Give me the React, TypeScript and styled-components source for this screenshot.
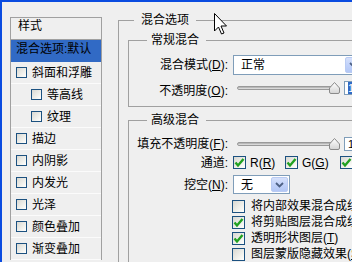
import React from 'react'
import styled, {createGlobalStyle} from 'styled-components'

const GlobalStyle = createGlobalStyle`
	html, body {
		margin: 0;
		padding: 0;
		background: #efefef;
	}
`

const Page = styled.div`
	position: relative;
	width: 352px;
	height: 262px;
	overflow: hidden;
	box-sizing: border-box;
	border-top: 2px solid #0a4be0;
	border-left: 2px solid #0a4be0;
	background: #efefef;
	display: flex;
	align-items: flex-start;
	font-family: "Liberation Sans", "Noto Sans CJK SC", sans-serif;
	font-size: 12px;
	color: #000;
`

const StyleList = styled.div`
	flex-shrink: 0;
	width: 92px;
	margin: 15px 0 0 8px;
	box-sizing: border-box;
	border: 1px solid #a0a0a0;
	border-bottom: none;
`

const ListHeader = styled.div`
	height: 22px;
	box-sizing: border-box;
	padding: 1px 0 0 7px;
	line-height: 14px;
	border-bottom: 1px solid #a0a0a0;
`

const ListRow = styled.div<{$level?: number, $selected?: boolean}>`
	height: 22px;
	box-sizing: border-box;
	display: flex;
	align-items: center;
	gap: 5px;
	padding-left: ${p => p.$level ? 20 : 5}px;
	padding-bottom: ${p => p.$selected ? 3 : 0}px;
	border-bottom: 1px solid ${p => p.$selected ? '#316ac5' : '#fbfbfb'};
	background: ${p => p.$selected ? '#316ac5' : 'transparent'};
	line-height: 14px;
	white-space: nowrap;
`

const SmallBox = styled.span`
	width: 11px;
	height: 11px;
	box-sizing: border-box;
	border: 1px solid #1c5180;
	background: linear-gradient(135deg, #d8d8d2 0%, #f4f4f0 70%, #ffffff 100%);
	flex-shrink: 0;
`

const Options = styled.fieldset`
	flex-shrink: 0;
	width: 260px;
	min-height: 300px;
	margin: 11px 0 0 16px;
	padding: 0;
	border: 1px solid #a0a0a0;
	border-right: none;
	border-bottom: none;
`

const Group = styled.fieldset<{$top: number, $pb: number}>`
	width: 250px;
	margin: ${p => p.$top}px 0 0 9px;
	padding: 0 0 ${p => p.$pb}px 0;
	border: 1px solid #a0a0a0;
	border-right: none;
	box-sizing: border-box;
`

const Legend = styled.legend<{$ml: number}>`
	margin-left: ${p => p.$ml}px;
	padding: 0 7px 0 ${p => p.$ml > 15 ? 4 : 7}px;
	line-height: 15px;
	font-size: 12px;
	white-space: nowrap;
`

const Row = styled.div<{$top: number, $h: number}>`
	display: grid;
	grid-template-columns: 99px 1fr;
	column-gap: 5px;
	align-items: center;
	height: ${p => p.$h}px;
	margin-top: ${p => p.$top}px;
`

const Label = styled.div<{$shift?: number}>`
	text-align: right;
	line-height: 14px;
	white-space: nowrap;
	position: relative;
	top: ${p => p.$shift || 0}px;
`

const Key = styled.span`
	text-decoration: underline;
`

const Select = styled.div<{$w: number, $h: number}>`
	width: ${p => p.$w}px;
	height: ${p => p.$h}px;
	box-sizing: border-box;
	border: 1px solid #7f9db9;
	background: #fff;
	display: flex;
	align-items: center;
	justify-content: space-between;
	padding: 1px;
`

const SelectText = styled.span`
	padding-left: 6px;
	line-height: 14px;
`

const DropButton = styled.span`
	width: 17px;
	height: 100%;
	box-sizing: border-box;
	border-radius: 2px;
	border: 1px solid #b9cbf3;
	background: linear-gradient(180deg, #d6e1fb 0%, #c1d2fa 50%, #b3c7f5 100%);
	display: flex;
	align-items: center;
	justify-content: center;
`

const SliderLine = styled.div`
	display: flex;
	align-items: center;
	gap: 4px;
`

const SliderTrackWrap = styled.div`
	position: relative;
	width: 107px;
	height: 14px;
	display: flex;
	align-items: center;
`

const Track = styled.div`
	margin-left: 4px;
	width: 99px;
	height: 4px;
	box-sizing: border-box;
	border: 1px solid #9a9a9a;
	border-radius: 2px;
	background: linear-gradient(180deg, #a8a8a8 0%, #d0d0d0 60%, #e8e8e8 100%);
`

const Thumb = styled.svg`
	position: absolute;
	right: 0;
	top: 1px;
`

const ValueBox = styled.div`
	width: 30px;
	height: 14px;
	box-sizing: border-box;
	border: 1px solid #7f9db9;
	background: #fff;
	padding: 0 0 0 3px;
	line-height: 12px;
	font-size: 11px;
	white-space: nowrap;
`

const Picked = styled.span<{$on: boolean}>`
	background: ${p => p.$on ? '#316ac5' : 'transparent'};
	color: ${p => p.$on ? '#fff' : '#000'};
`

const Channels = styled.div`
	display: flex;
	align-items: center;
`

const Channel = styled.label<{$w: number}>`
	width: ${p => p.$w}px;
	display: flex;
	align-items: center;
	gap: 4px;
	line-height: 14px;
`

const CheckBox = styled.span`
	width: 13px;
	height: 13px;
	box-sizing: border-box;
	border: 1px solid #1c5180;
	background: linear-gradient(135deg, #d8d8d2 0%, #f4f4f0 70%, #ffffff 100%);
	flex-shrink: 0;
	display: flex;
	align-items: center;
	justify-content: center;
`

const ExtraList = styled.div`
	margin: 4px 0 0 103px;
	display: flex;
	flex-direction: column;
`

const ExtraItem = styled.div`
	height: 16px;
	display: flex;
	align-items: center;
	gap: 6px;
	line-height: 14px;
	white-space: nowrap;
`

const Cursor = styled.svg`
	position: absolute;
	left: 212px;
	top: 11px;
`

const Check = () => (
	<svg width="11" height="11" viewBox="0 0 11 11">
		<polyline points="1.5,5.5 4,8.5 9.5,2" fill="none" stroke="#21a121" strokeWidth="2.4" />
	</svg>
)

const Chevron = () => (
	<svg width="9" height="6" viewBox="0 0 9 6">
		<polyline points="1,1 4.5,4.5 8,1" fill="none" stroke="#4d6185" strokeWidth="1.8" />
	</svg>
)

const Box = ({checked}: {checked?: boolean}) => (
	<CheckBox>{checked && <Check />}</CheckBox>
)

const Slider = ({selected}: {selected?: boolean}) => (
	<SliderLine>
		<SliderTrackWrap>
			<Track />
			<Thumb width="11" height="12" viewBox="0 0 11 12">
				<defs>
					<linearGradient id="thumbfill" x1="0" y1="0" x2="0" y2="1">
						<stop offset="0" stopColor="#ffffff" />
						<stop offset="1" stopColor="#d4d4d4" />
					</linearGradient>
				</defs>
				<path d="M5.5 0.5 L10.5 6 V10 Q10.5 11.5 9 11.5 H2 Q0.5 11.5 0.5 10 V6 Z" fill="url(#thumbfill)" stroke="#8a8a8a" />
			</Thumb>
		</SliderTrackWrap>
		<ValueBox><Picked $on={!!selected}>100</Picked></ValueBox>
	</SliderLine>
)

const effects = [
	{label: '斜面和浮雕', level: 0},
	{label: '等高线', level: 1},
	{label: '纹理', level: 1},
	{label: '描边', level: 0},
	{label: '内阴影', level: 0},
	{label: '内发光', level: 0},
	{label: '光泽', level: 0},
	{label: '颜色叠加', level: 0},
	{label: '渐变叠加', level: 0},
]

const extras = [
	{label: '将内部效果混合成组', checked: false},
	{label: '将剪贴图层混合成组', checked: true},
	{label: <>透明形状图层(<Key>T</Key>)</>, checked: true},
	{label: <>图层蒙版隐藏效果(<Key>S</Key>)</>, checked: false},
]

export default function App() {
	return (
		<Page>
			<GlobalStyle />
			<StyleList>
				<ListHeader>样式</ListHeader>
				<ListRow $selected>混合选项:默认</ListRow>
				{effects.map(e => (
					<ListRow key={e.label} $level={e.level}>
						<SmallBox />
						<span>{e.label}</span>
					</ListRow>
				))}
			</StyleList>

			<Options>
				<Legend $ml={15}>混合选项</Legend>

				<Group $top={5} $pb={10}>
					<Legend $ml={18}>常规混合</Legend>
					<Row $top={7} $h={20}>
						<Label>混合模式(<Key>D</Key>):</Label>
						<Select $w={131} $h={20}>
							<SelectText>正常</SelectText>
							<DropButton><Chevron /></DropButton>
						</Select>
					</Row>
					<Row $top={5} $h={16}>
						<Label $shift={3}>不透明度(<Key>O</Key>):</Label>
						<Slider selected />
					</Row>
				</Group>

				<Group $top={6} $pb={0}>
					<Legend $ml={18}>高级混合</Legend>
					<Row $top={8} $h={16}>
						<Label>填充不透明度(<Key>F</Key>):</Label>
						<Slider />
					</Row>
					<Row $top={3} $h={15}>
						<Label>通道:</Label>
						<Channels>
							<Channel $w={52}><Box checked /><span>R(<Key>R</Key>)</span></Channel>
							<Channel $w={55}><Box checked /><span>G(<Key>G</Key>)</span></Channel>
							<Channel $w={55}><Box checked /><span>B(<Key>B</Key>)</span></Channel>
						</Channels>
					</Row>
					<Row $top={5} $h={19}>
						<Label>挖空(<Key>N</Key>):</Label>
						<Select $w={57} $h={19}>
							<SelectText>无</SelectText>
							<DropButton><Chevron /></DropButton>
						</Select>
					</Row>
					<ExtraList>
						{extras.map((x, i) => (
							<ExtraItem key={i}>
								<Box checked={x.checked} />
								<span>{x.label}</span>
							</ExtraItem>
						))}
					</ExtraList>
				</Group>
			</Options>

			<Cursor width="14" height="23" viewBox="0 0 14 23">
				<path d="M0.5 0.5 V18 L4.5 14 L7.5 21 L10 20 L7 13 H12.5 Z" fill="#fff" stroke="#000" strokeLinejoin="miter" />
			</Cursor>
		</Page>
	)
}
